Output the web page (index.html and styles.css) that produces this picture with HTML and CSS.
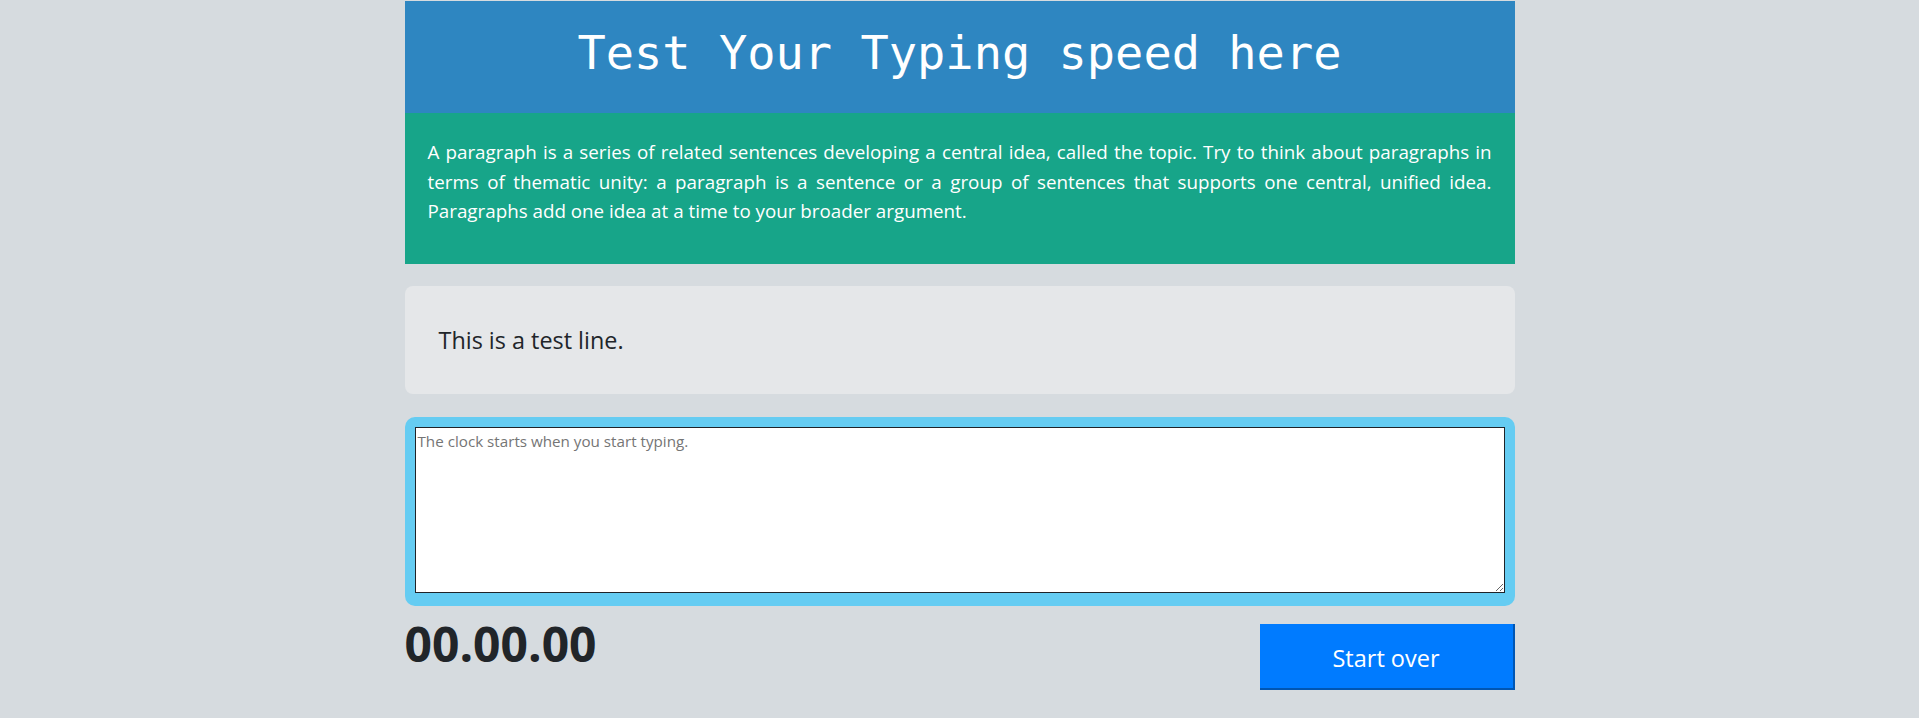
FILE: index.html
```html
<!DOCTYPE html>
<html lang="en">
<head>
<meta charset="utf-8">
<title>Typing speed test</title>
<link rel="stylesheet" href="styles.css">
</head>
<body>
<main class="container">
  <header class="banner">
    <h1 class="title">Test Your Typing speed here</h1>
  </header>
  <section class="intro">
    <p class="intro-text">A paragraph is a series of related sentences developing a central idea, called the topic. Try to think about paragraphs in terms of thematic unity: a paragraph is a sentence or a group of sentences that supports one central, unified idea. Paragraphs add one idea at a time to your broader argument.</p>
  </section>
  <section class="origin">
    <p class="origin-text">This is a test line.</p>
  </section>
  <div class="input-wrap">
    <textarea class="typing" placeholder="The clock starts when you start typing."></textarea>
  </div>
  <div class="meta">
    <div class="timer">00.00.00</div>
    <button class="reset" type="button">Start over</button>
  </div>
</main>
</body>
</html>
```

FILE: styles.css
```css
* {
  box-sizing: border-box;
}

html,
body {
  margin: 0;
  padding: 0;
}

body {
  background: #d6dbdf;
  font-family: "Open Sans", sans-serif;
  color: #212529;
}

.container {
  width: 1110px;
  margin: 0 auto;
  padding-top: 1px;
}

.banner {
  background: #2e86c1;
  height: 112px;
  padding-top: 28px;
}

.title {
  margin: 0;
  font-family: "DejaVu Sans Mono", monospace;
  font-weight: normal;
  font-size: 47px;
  line-height: 48px;
  color: #ffffff;
  text-align: center;
}

.intro {
  background: #17a589;
  height: 151px;
  padding: 25px 23px 0;
}

.intro-text {
  margin: 0;
  font-size: 18.8px;
  line-height: 29.5px;
  color: #ffffff;
  text-align: justify;
}

.origin {
  margin-top: 22px;
  height: 108px;
  background: #e5e7e9;
  border-radius: 8px;
  padding: 0 34px;
  display: flex;
  align-items: center;
}

.origin-text {
  margin: 0;
  font-size: 23.4px;
  color: #212529;
}

.input-wrap {
  margin-top: 23px;
  background: #65ccf2;
  border-radius: 10px;
  padding: 10px 10px 13px;
}

.typing {
  display: block;
  width: 100%;
  height: 166px;
  margin: 0;
  padding: 3px 2px 2px;
  border: 1px solid #1f2328;
  background: #ffffff;
  font-family: "Open Sans", sans-serif;
  font-size: 15.2px;
  color: #212529;
  resize: both;
}

.typing::placeholder {
  color: #757575;
}

.meta {
  display: flex;
  justify-content: space-between;
  align-items: flex-start;
  margin-top: 14px;
}

.timer {
  font-size: 48px;
  font-weight: 700;
  line-height: 48px;
  color: #212529;
}

.reset {
  margin-top: 4px;
  width: 255px;
  height: 66px;
  background: #007bff;
  color: #ffffff;
  border: 0;
  border-right: 2px solid #0056b3;
  border-bottom: 2px solid #0056b3;
  font-family: "Open Sans", sans-serif;
  font-size: 23.5px;
  padding: 3px 0 0;
  cursor: pointer;
}
```
